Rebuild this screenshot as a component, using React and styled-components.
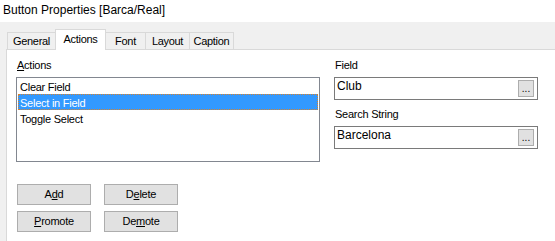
import React from 'react';
import styled, { createGlobalStyle } from 'styled-components';

const GlobalStyle = createGlobalStyle`
  html, body, #root {
    margin: 0;
    height: 100%;
  }
  body {
    background: #ffffff;
    font-family: 'Liberation Sans', Arial, sans-serif;
    font-size: 11px;
    color: #000000;
    overflow: hidden;
  }
  * {
    box-sizing: border-box;
  }
`;

const Window = styled.div`
  display: flex;
  flex-direction: column;
  height: 100%;
`;

const TitleBar = styled.div`
  height: 22px;
  padding-left: 3px;
  font-size: 12px;
  line-height: 20px;
  background: #ffffff;
`;

const DialogBody = styled.div`
  flex: 1;
  display: flex;
  flex-direction: column;
  background: #f0f0f0;
  padding: 7px 0 0 6px;
`;

const TabStrip = styled.div`
  display: flex;
  align-items: flex-end;
  height: 20px;
  padding-left: 1px;
  letter-spacing: -0.3px;
`;

const Tab = styled.div`
  position: relative;
  width: ${(p) => p.$w}px;
  height: ${(p) => (p.$active ? 21 : 17)}px;
  margin-left: -1px;
  margin-bottom: ${(p) => (p.$active ? -1 : 0)}px;
  z-index: ${(p) => (p.$active ? 1 : 0)};
  display: flex;
  align-items: center;
  justify-content: center;
  padding-bottom: ${(p) => (p.$active ? 3 : 0)}px;
  border: 1px solid #d9d9d9;
  border-bottom: none;
  background: ${(p) => (p.$active ? '#ffffff' : '#f0f0f0')};
  &:first-child {
    margin-left: 0;
  }
`;

const Panel = styled.div`
  flex: 1;
  background: #ffffff;
  border-top: 1px solid #d9d9d9;
  border-left: 1px solid #d9d9d9;
  padding: 9px 0 0 9px;
  letter-spacing: -0.25px;
`;

const Columns = styled.div`
  display: flex;
  gap: 14px;
`;

const LeftColumn = styled.div`
  width: 304px;
  display: flex;
  flex-direction: column;
`;

const RightColumn = styled.div`
  width: 204px;
  display: flex;
  flex-direction: column;
  gap: 8px;
`;

const FieldGroup = styled.div`
  display: flex;
  flex-direction: column;
`;

const Label = styled.div`
  line-height: 13px;
  margin-bottom: 5px;
  padding-left: 1px;
`;

const ListBox = styled.div`
  height: 85px;
  border: 1px solid #828790;
  padding: 0 1px;
`;

const ListItem = styled.div`
  height: 16px;
  line-height: 14px;
  padding: 2px 0 0 2px;
  background: ${(p) => (p.$selected ? '#3399ff' : 'transparent')};
  color: ${(p) => (p.$selected ? '#ffffff' : '#000000')};
  outline: ${(p) => (p.$selected ? '1px dotted #d9822b' : 'none')};
  outline-offset: -1px;
`;

const TextBox = styled.div`
  height: 23px;
  border: 1px solid #7a7a7a;
  display: flex;
  align-items: flex-start;
  justify-content: space-between;
  padding: 1px 3px 0 2px;
  font-size: 12px;
  line-height: 14px;
  letter-spacing: 0;
`;

const BrowseButton = styled.div`
  width: 16px;
  height: 17px;
  margin-top: 1px;
  background: #e1e1e1;
  border: 1px solid #adadad;
  display: flex;
  align-items: flex-end;
  justify-content: center;
  font-size: 10px;
  line-height: 13px;
  padding-bottom: 1px;
`;

const ButtonGrid = styled.div`
  display: grid;
  grid-template-columns: 74px 74px;
  column-gap: 13px;
  row-gap: 6px;
  margin-top: 22px;
  padding-left: 1px;
`;

const Button = styled.div`
  height: 21px;
  background: #e1e1e1;
  border: 1px solid #adadad;
  display: flex;
  align-items: center;
  justify-content: center;
  line-height: 13px;
  u {
    text-decoration: underline;
    text-underline-offset: 1px;
  }
`;

const tabs = [
  { name: 'General', w: 49 },
  { name: 'Actions', w: 51, active: true },
  { name: 'Font', w: 41 },
  { name: 'Layout', w: 45 },
  { name: 'Caption', w: 45 },
];

const actions = ['Clear Field', 'Select in Field', 'Toggle Select'];

const App = () => (
  <>
    <GlobalStyle />
    <Window>
      <TitleBar>Button Properties [Barca/Real]</TitleBar>
      <DialogBody>
        <TabStrip>
          {tabs.map((t) => (
            <Tab key={t.name} $w={t.w} $active={t.active}>
              {t.name}
            </Tab>
          ))}
        </TabStrip>
        <Panel>
          <Columns>
            <LeftColumn>
              <Label>
                <u>A</u>ctions
              </Label>
              <ListBox>
                {actions.map((a) => (
                  <ListItem key={a} $selected={a === 'Select in Field'}>
                    {a}
                  </ListItem>
                ))}
              </ListBox>
              <ButtonGrid>
                <Button>
                  A<u>d</u>d
                </Button>
                <Button>
                  D<u>e</u>lete
                </Button>
                <Button>
                  <u>P</u>romote
                </Button>
                <Button>
                  De<u>m</u>ote
                </Button>
              </ButtonGrid>
            </LeftColumn>
            <RightColumn>
              <FieldGroup>
                <Label>Field</Label>
                <TextBox>
                  <span>Club</span>
                  <BrowseButton>...</BrowseButton>
                </TextBox>
              </FieldGroup>
              <FieldGroup>
                <Label>Search String</Label>
                <TextBox>
                  <span>Barcelona</span>
                  <BrowseButton>...</BrowseButton>
                </TextBox>
              </FieldGroup>
            </RightColumn>
          </Columns>
        </Panel>
      </DialogBody>
    </Window>
  </>
);

export default App;
